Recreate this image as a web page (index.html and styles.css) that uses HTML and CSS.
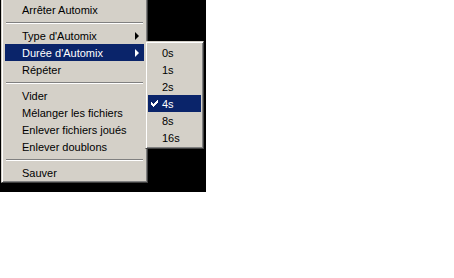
FILE: index.html
```html
<!DOCTYPE html>
<html lang="fr">

<head>
    <meta charset="UTF-8">
    <title>Automix</title>
    <link rel="stylesheet" href="styles.css">
</head>

<body>
    <div class="screen">
        <div class="menu main-menu">
            <div class="item">Arrêter Automix</div>
            <div class="sep"></div>
            <div class="item">Type d'Automix <span class="arrow"></span></div>
            <div class="item active">Durée d'Automix <span class="arrow"></span></div>
            <div class="item">Répéter</div>
            <div class="sep"></div>
            <div class="item">Vider</div>
            <div class="item">Mélanger les fichiers</div>
            <div class="item">Enlever fichiers joués</div>
            <div class="item">Enlever doublons</div>
            <div class="sep"></div>
            <div class="item">Sauver</div>
        </div>

        <div class="menu sub-menu">
            <div class="item">0s</div>
            <div class="item">1s</div>
            <div class="item">2s</div>
            <div class="item active">
                <svg class="check" width="7" height="7" viewBox="0 0 7 7">
                    <path d="M0 2h1v1h1v1h1v-1h1v-1h1v-1h1v-1h1v3h-1v1h-1v1h-1v1h-1v1h-1v-1h-1v-1h-1z" fill="#fff"/>
                </svg>
                4s
            </div>
            <div class="item">8s</div>
            <div class="item">16s</div>
        </div>
    </div>
</body>

</html>
```

FILE: styles.css
```css
body {
    margin: 0;
    background-color: #ffffff;
    font-family: Tahoma, "Liberation Sans", Arial, sans-serif;
    font-size: 11px;
}

.screen {
    position: relative;
    width: 206px;
    height: 192px;
    background-color: #000000;
    overflow: hidden;
}

.menu {
    background-color: #d4d0c8;
    border: 1px solid;
    border-color: #d4d0c8 #404040 #404040 #d4d0c8;
    box-shadow: inset 1px 1px #ffffff, inset -1px -1px #808080;
    box-sizing: border-box;
}

.main-menu {
    width: 147px;
    margin-left: 1px;
    margin-top: -2px;
    padding: 2px 3px 1px 3px;
}

.sub-menu {
    position: absolute;
    left: 145px;
    top: 41px;
    width: 59px;
    padding: 2px;
}

.item {
    position: relative;
    height: 17px;
    line-height: 18px;
    padding-left: 17px;
    color: #000000;
    white-space: nowrap;
}

.sub-menu .item {
    padding-left: 14px;
}

.item.active {
    background-color: #0a246a;
    color: #ffffff;
}

.arrow {
    position: absolute;
    right: 5px;
    top: 5px;
    width: 0;
    height: 0;
    border-left: 4px solid #000000;
    border-top: 4px solid transparent;
    border-bottom: 4px solid transparent;
}

.active .arrow {
    border-left-color: #ffffff;
}

.check {
    position: absolute;
    left: 3px;
    top: 5px;
}

.sep {
    height: 9px;
    display: flex;
    flex-direction: column;
    justify-content: center;
    padding: 0 1px;
}

.sep::before {
    content: "";
    display: block;
    height: 1px;
    background-color: #808080;
    border-bottom: 1px solid #ffffff;
}
```
